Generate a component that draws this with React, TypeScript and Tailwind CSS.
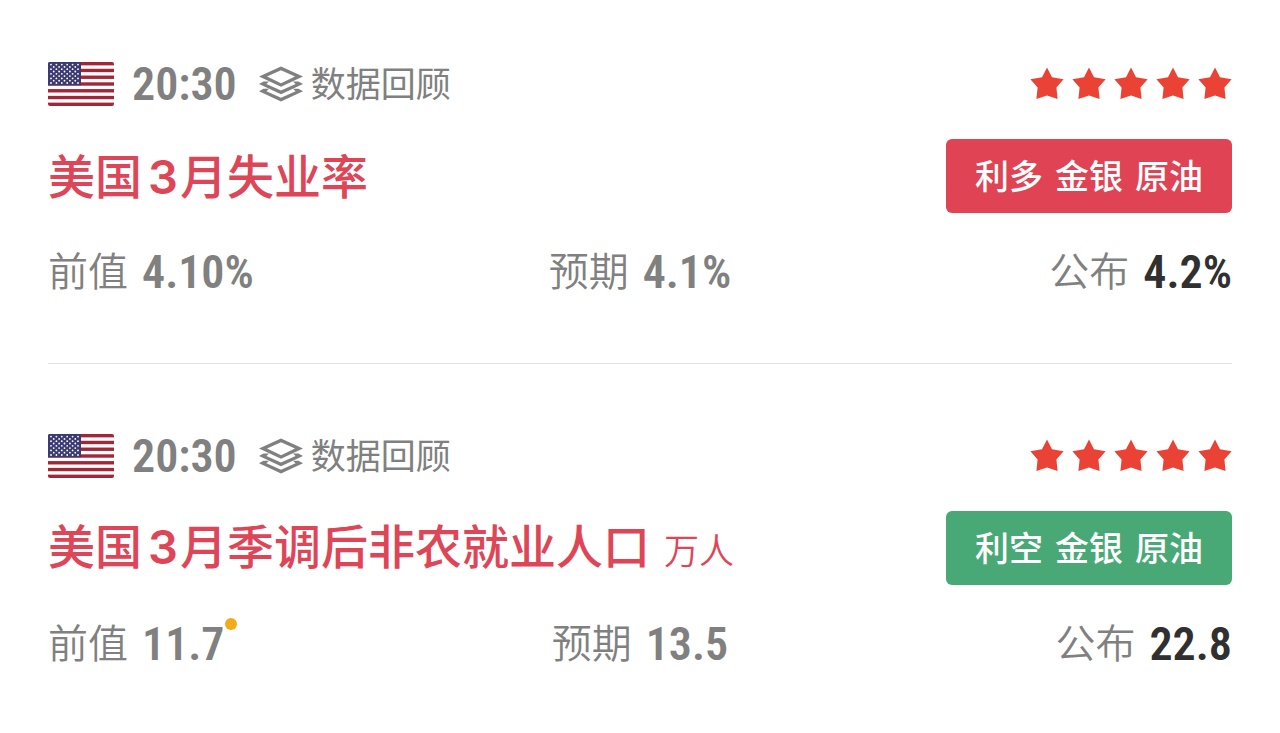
type Figure = { label: string; value: string; revised?: boolean; strong?: boolean };

type Release = {
  id: string;
  time: string;
  region: string;
  month: string;
  name: string;
  unit?: string;
  trend: "up" | "down";
  tags: string[];
  figures: Figure[];
};

const releases: Release[] = [
  {
    id: "unemployment",
    time: "20:30",
    region: "美国",
    month: "3",
    name: "月失业率",
    trend: "up",
    tags: ["利多", "金银", "原油"],
    figures: [
      { label: "前值", value: "4.10%" },
      { label: "预期", value: "4.1%" },
      { label: "公布", value: "4.2%", strong: true },
    ],
  },
  {
    id: "nonfarm",
    time: "20:30",
    region: "美国",
    month: "3",
    name: "月季调后非农就业人口",
    unit: "万人",
    trend: "down",
    tags: ["利空", "金银", "原油"],
    figures: [
      { label: "前值", value: "11.7", revised: true },
      { label: "预期", value: "13.5" },
      { label: "公布", value: "22.8", strong: true },
    ],
  },
];

const numberFont =
  "text-[46px] leading-14 font-semibold font-['Liberation_Sans_Narrow','Roboto_Condensed',Roboto,sans-serif]";

function UsFlag() {
  const dots = [];
  for (let row = 0; row < 9; row++) {
    const count = row % 2 === 0 ? 6 : 5;
    for (let col = 0; col < count; col++) {
      dots.push(
        <circle
          key={`${row}-${col}`}
          cx={3 + col * 5.4 + (row % 2 === 0 ? 0 : 2.7)}
          cy={2.6 + row * 2.3}
          r="0.9"
          fill="#fff"
        />
      );
    }
  }
  return (
    <svg viewBox="0 0 66 44" className="h-11 w-[66px] shrink-0 rounded-xs" aria-hidden="true">
      <rect width="66" height="44" fill="#fff" />
      {[0, 1, 2, 3, 4, 5, 6].map((i) => (
        <rect key={i} y={i * 6.77} width="66" height="3.38" fill="#a32638" />
      ))}
      <rect width="33" height="23.3" fill="#3b3b72" />
      {dots}
    </svg>
  );
}

function LayersIcon() {
  return (
    <svg viewBox="0 0 44 36" className="h-9 w-11 shrink-0" fill="currentColor" aria-hidden="true">
      <path
        fillRule="evenodd"
        d="M22 .6 44 10.6 22 20.8 0 10.6ZM22 4.2 8 10.6 22 17.2 36 10.6Z"
      />
      <path d="M0 18 4.5 15.6H10L7.4 18 22 24.6 36.6 18 34 15.6H39.5L44 18 22 28.2Z" />
      <path d="M0 25.2 4.5 22.8H10L7.4 25.2 22 31.8 36.6 25.2 34 22.8H39.5L44 25.2 22 35.4Z" />
    </svg>
  );
}

function Stars() {
  return (
    <div className="flex gap-2" role="img" aria-label="5">
      {[0, 1, 2, 3, 4].map((i) => (
        <svg key={i} viewBox="0 0 34 34" className="size-[34px]" aria-hidden="true">
          <path
            d="M17 .4 22 10.2 33.6 12.2 26.4 20.4 27.6 32 17 28.4 6.4 32 7.6 20.4 .4 12.2 12 10.2Z"
            fill="#ea4335"
          />
        </svg>
      ))}
    </div>
  );
}

function ReleaseCard({ item }: { item: Release }) {
  return (
    <article className="border-b border-[#e2e2e2] pt-16 pb-[63px] first:pt-14 last:border-b-0">
      <div className="flex h-14 items-center justify-between">
        <div className="flex items-center">
          <UsFlag />
          <time className={`ml-[18px] ${numberFont}`}>{item.time}</time>
          <a href={`#${item.id}`} className="ml-[22px] flex items-center gap-2 text-[35px] leading-14">
            <LayersIcon />
            数据回顾
          </a>
        </div>
        <Stars />
      </div>

      <div className="mt-[27px] flex items-center justify-between">
        <h2 className="pt-[2px] text-[47px] leading-14 font-medium text-[#de4658]">
          {item.region}
          <span className="mr-[2px] ml-[6px] font-semibold">{item.month}</span>
          {item.name}
          {item.unit && <small className="ml-[14px] text-[35px] font-[350]">{item.unit}</small>}
        </h2>
        <div
          className={`flex h-[74px] items-center gap-3 rounded-md px-[29px] text-[34px] font-medium text-white ${
            item.trend === "up" ? "bg-[#e04354]" : "bg-[#48a976]"
          }`}
        >
          {item.tags.map((tag) => (
            <span key={tag}>{tag}</span>
          ))}
        </div>
      </div>

      <dl className="mt-[31px] grid grid-cols-3">
        {item.figures.map((f) => (
          <div
            key={f.label}
            className="flex h-14 items-center justify-center gap-[14px] first:justify-start last:justify-end"
          >
            <dt className="text-[40px] leading-14 font-[350]">{f.label}</dt>
            <dd className={`relative ${numberFont} ${f.strong ? "text-[#303030]" : ""}`}>
              {f.value}
              {f.revised && (
                <span className="absolute top-[2px] left-full size-3 rounded-full bg-[#f2ac18]" />
              )}
            </dd>
          </div>
        ))}
      </dl>
    </article>
  );
}

export default function App() {
  return (
    <main
      className="min-h-screen bg-white px-12 font-[Inter,'Noto_Sans_CJK_SC',sans-serif] text-[#808080]"
      lang="zh-CN"
    >
      {releases.map((item) => (
        <ReleaseCard key={item.id} item={item} />
      ))}
    </main>
  );
}
